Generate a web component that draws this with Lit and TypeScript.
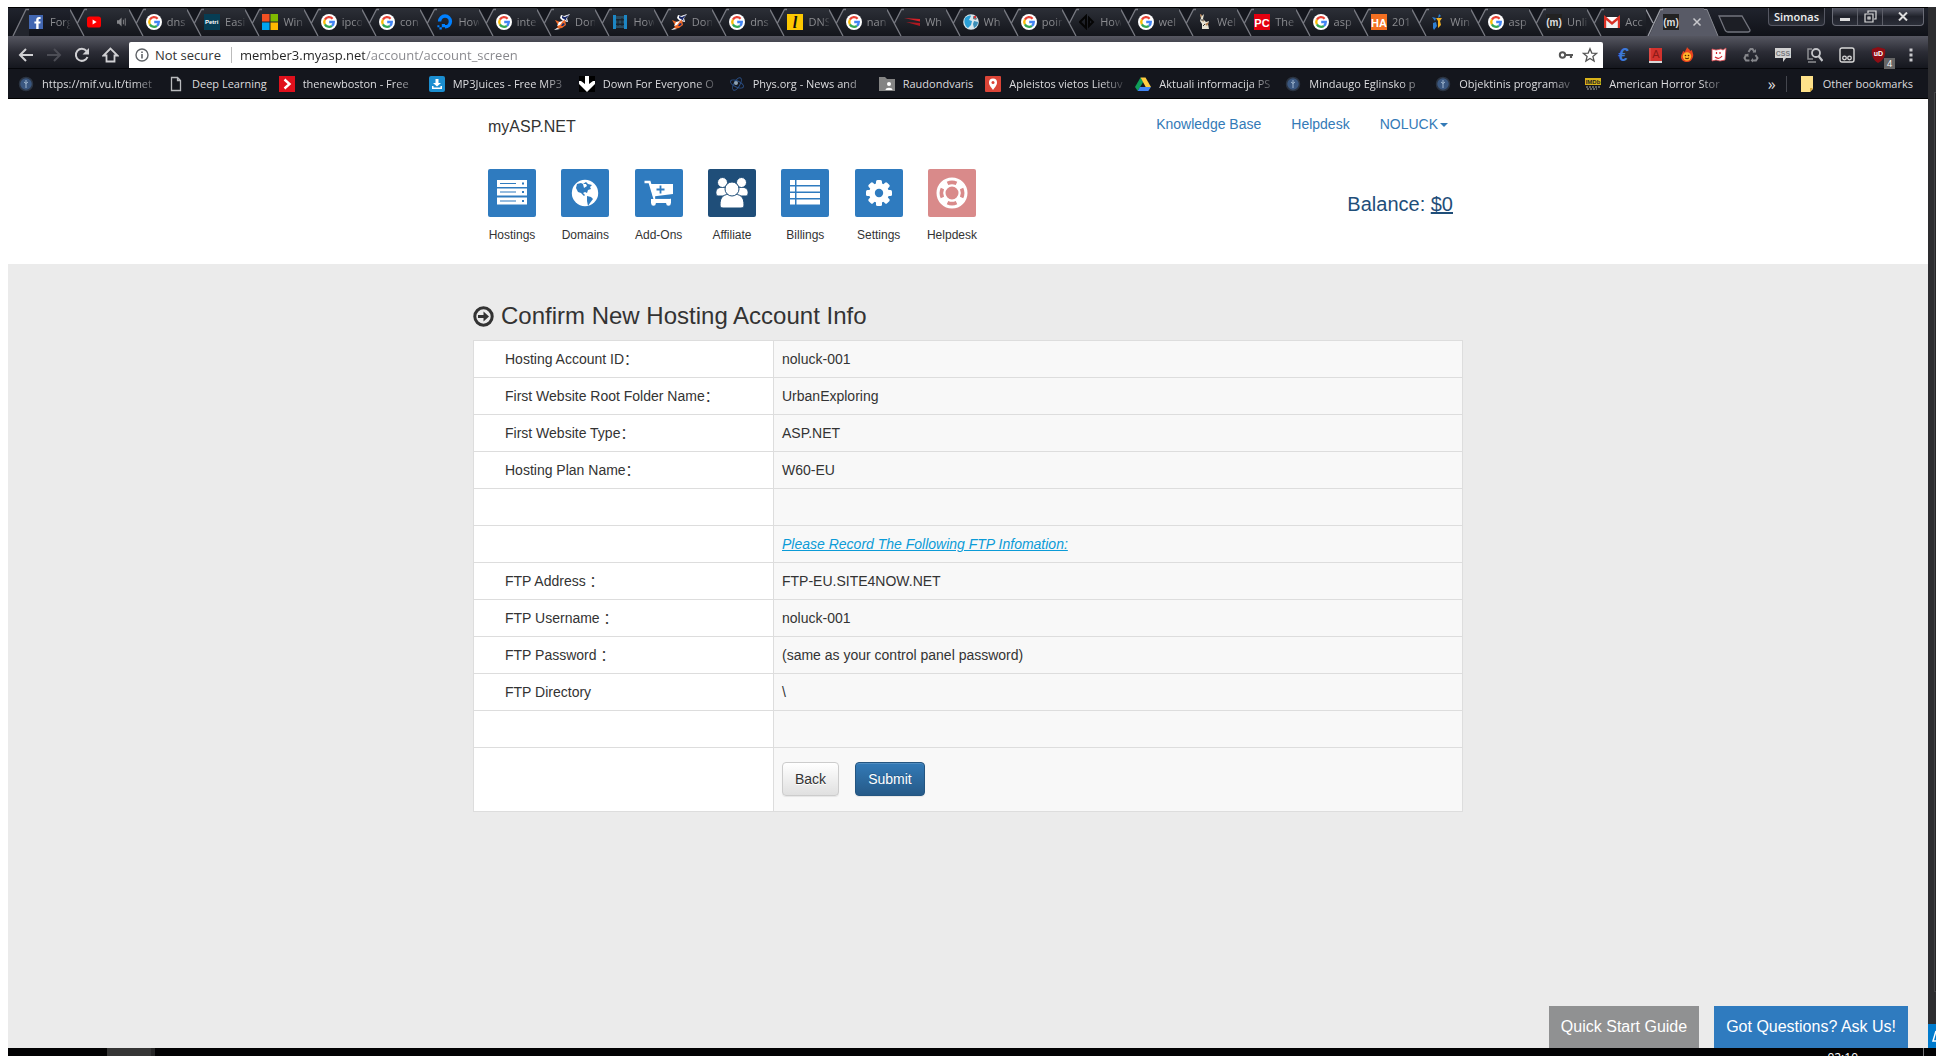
import { LitElement, html, css, svg, nothing, TemplateResult, SVGTemplateResult } from "lit";
import { customElement, property } from "lit/decorators.js";
import { classMap } from "lit/directives/class-map.js";

const art: Record<string, SVGTemplateResult> = {
  google: svg`<circle cx="8" cy="8" r="8" fill="#fff"/>
    <g fill="none" stroke-width="2.3"><path d="M11.6 4.7A4.8 4.8 0 0 0 3.9 5.6" stroke="#ea4335"/>
    <path d="M3.9 5.6A4.8 4.8 0 0 0 3.9 10.4" stroke="#fbbc05"/>
    <path d="M3.9 10.4A4.8 4.8 0 0 0 11 11.8" stroke="#34a853"/>
    <path d="M11 11.8A4.8 4.8 0 0 0 12.8 8H8.2" stroke="#4285f4"/></g>`,
  facebook: svg`<rect x="0" y="1" width="14" height="14" fill="#4267b2"/><path d="M7.2 15V9.600H5.400V7.400h1.800V5.800c0-1.900 1.100-2.900 2.900-2.900h1.500v2.100h-1c-.8 0-1 .4-1 1v1.400h2l-.3 2.200h-1.700V15z" fill="#fff"/>`,
  youtube: svg`<rect x="0" y="2.5" width="14" height="11" rx="2.6" fill="#f00"/><path d="M5.600 5.500v5L9.600 8z" fill="#fff"/>`,
  petri: svg`<rect width="16" height="16" fill="#063d54"/><text x="1" y="10" font-size="6" font-weight="bold" fill="#fff" font-family="Liberation Sans, sans-serif">Petri</text>`,
  windows: svg`<path d="M0 0h7.5v7.5H0z" fill="#f25022"/><path d="M8.5 0H16v7.5H8.5z" fill="#7fba00"/><path d="M0 8.5h7.5V16H0z" fill="#00a4ef"/><path d="M8.5 8.5H16V16H8.5z" fill="#ffb900"/>`,
  ocean: svg`<path d="M8 12.8A5.4 5.4 0 1 0 2.6 7.4" fill="none" stroke="#0080ff" stroke-width="3.4"/><path d="M4.8 10H8v3.2H4.8zM2.4 13.2h2.4v2.4H2.4zM.4 11.2h2v2h-2z" fill="#0080ff"/>`,
  bird: svg`<path d="M7 1l3 1 6-2-3 4 1 4-5-1-3-3z" fill="#fff"/><path d="M8 2l3 1 4-2-3 4 1 2-5-3z" fill="#1b2a6b"/><path d="M1 6l5 2 5-2 1 5-4 3-5 1 1-4z" fill="#f06a28"/><path d="M5 8l4-1-3 4-3 1z" fill="#fff"/><path d="M9 9l2 1-2 2-2 0z" fill="#1b2a6b"/><path d="M0 16l3-2 3 1z" fill="#fff"/>`,
  server: svg`<path d="M1 1h3v14H1zM12 1h3v14h-3z" fill="#1c86c4"/><path d="M4 2h8v3H4zM4 6.500h8v3H4zM4 11h8v3H4z" fill="#2a4a5e"/><path d="M6 5v7M10 4v8" stroke="#10222e"/>`,
  letterL: svg`<rect width="16" height="16" fill="#fdc800"/><text x="8" y="13.500" text-anchor="middle" font-size="16" font-style="italic" font-weight="bold" fill="#111" font-family="Liberation Serif, serif">l</text>`,
  flag: svg`<path d="M0 4l16 1v2.500z" fill="#d62027"/><path d="M2 8l14 1v3z" fill="#b01820"/>`,
  globe: svg`<circle cx="8" cy="8" r="7.800" fill="#d8e8ee"/><path d="M2 4c2-2 5-3 6-2L6 6l3 1-1 4-3 3C2 12 .5 8 2 4z" fill="#2a9fd6"/><path d="M11 7l4 1c0 3-2 5-4 6l-1-4z" fill="#3b8fb8"/><path d="M10 2l4 2-1 2-3-1z" fill="#6b7f88"/><circle cx="12" cy="3" r="1.200" fill="#d33"/>`,
  diamond: svg`<path d="M7 2L1 8l6 6V2zM10 4v8l4-4z" fill="none" stroke="#050505" stroke-width="2"/>`,
  rabbit: svg`<path d="M4 0l2 2 2-2-1 5 3 3 3-1-1 3 1 5H6l0-5-2-3 1-3z" fill="#e8e4d4"/><path d="M4 0l2 1-1 3zM6 6l2 1-1 1zM9 10l4-2-2 4z" fill="#b07a4a"/><path d="M5 6h3M7 12l2-2" stroke="#333"/>`,
  pc: svg`<rect width="16" height="16" fill="#e4000f"/><text x="8" y="12.500" text-anchor="middle" font-size="11" font-weight="bold" fill="#fff" font-family="Liberation Sans, sans-serif">PC</text>`,
  joomla: svg`<path d="M10 0l2 2-3 2zM3 3l4 1-1 3zM4 9l3-1 1 4-3 4-1-2z" fill="#2d7fd3"/><path d="M7 4h6l-2 3 1 4-3 3 0-7z" fill="#f5b324"/>`,
  m: svg`<rect width="16" height="16" fill="#222"/><text x="8" y="12" text-anchor="middle" font-size="10" font-weight="bold" fill="#ddd" font-family="Liberation Sans, sans-serif">(m)</text>`,
  ha: svg`<rect width="16" height="16" fill="#f36f21"/><text x="8" y="12.500" text-anchor="middle" font-size="11" font-weight="bold" fill="#fff" font-family="Liberation Sans, sans-serif">HA</text>`,
  gmail: svg`<path d="M1 3h14v11H1z" fill="#f2f2f2"/><path d="M1 14V3.500l7 6 7-6V14" fill="none" stroke="#d93025" stroke-width="2.400"/><path d="M3 3l5 4 5-4z" fill="#fff"/>`,
  crest: svg`<circle cx="8" cy="8" r="6.500" fill="#3a5780" stroke="#2b3442" stroke-width="1.500"/><path d="M8 4v8M6 6l2 1.500L10 6" stroke="#9db4cc" fill="none"/>`,
  page: svg`<path d="M3.500 1.500h6l3 3v10h-9z M9.500 1.500v3h3" fill="none" stroke="#b9babd" stroke-width="1.300"/>`,
  boston: svg`<rect width="16" height="16" fill="#e0101c"/><path d="M5.500 3.500L10.500 8l-5 4.500" fill="none" stroke="#fff" stroke-width="2.400"/>`,
  juice: svg`<rect width="16" height="16" rx="2" fill="#1b8ed0"/><path d="M6.500 3h3v4H12L8 10.500 4 7h2.500zM3 10h1.500v1.500h7V10H13v3H3z" fill="#fff"/>`,
  down: svg`<rect width="16" height="16" fill="#000"/><path d="M6 0h4v8l4-3h2v3l-8 8-8-8V5h2l4 3z" fill="#fff"/>`,
  atom: svg`<g fill="none" stroke="#2a4f86" stroke-width="1"><ellipse cx="8" cy="8" rx="7" ry="3" transform="rotate(25 8 8)"/><ellipse cx="8" cy="8" rx="7" ry="3" transform="rotate(-60 8 8)"/></g><circle cx="7" cy="7" r="2" fill="#8ea3b5"/>`,
  folder: svg`<path d="M0 1h6l2 2h8v12H0z" fill="#848484"/><circle cx="10" cy="8" r="2" fill="#fff"/><path d="M6.500 14c0-3 7-3 7 0z" fill="#fff"/>`,
  pin: svg`<rect width="16" height="16" rx="1" fill="#db4437"/><path d="M8 14C5 10 4 8.500 4 6.500a4 4 0 0 1 8 0C12 8.500 11 10 8 14z" fill="#fff"/><circle cx="8" cy="6.500" r="1.500" fill="#db4437"/>`,
  drive: svg`<path d="M5.500 1.500L0 11l2.700 4L8.200 6z" fill="#0f9d58"/><path d="M5.500 1.500h5L16 11h-5.300z" fill="#ffcd40"/><path d="M5 11h11l-2.700 4H2.700z" fill="#4285f4"/>`,
  imdb: svg`<rect y="2" width="16" height="7" fill="#d8b21a"/><text x="8" y="8" text-anchor="middle" font-size="6" font-weight="bold" fill="#222" font-family="Liberation Sans, sans-serif">IMDb</text><path d="M1 11h14M2 13h10" stroke="#aaa" stroke-dasharray="2 1"/>`,
  note: svg`<path d="M2 0h12v13l-3 3H2z" fill="#ffe28a"/><path d="M14 12h-3v4z" fill="#d9a93a"/>`,
};

const extensions: Array<[string, SVGTemplateResult]> = [
  ["Euro converter", svg`<text x="8" y="14" text-anchor="middle" font-size="18" font-weight="bold" font-style="italic" fill="#3c78d8" font-family="Liberation Sans, sans-serif">€</text>`],
  ["Dictionary", svg`<path d="M2 1h13v13H2z" fill="#d2322d"/><path d="M2 14h13v2H2z" fill="#d8d8d8"/><text x="9" y="11" text-anchor="middle" font-size="11" fill="#8b1a17" font-family="Liberation Sans, sans-serif">A</text><path d="M3 1v13" stroke="#e8605c"/>`],
  ["Flame", svg`<path d="M8 0c1 2 3 2 3 4l2-1c0 2 2 4 1 7s-3 5-6 5-6-2-6-5 2-4 2-6l2 1c0-2 2-3 2-5z" fill="#e8431f"/><circle cx="8" cy="9.500" r="4.200" fill="#ffb52b"/><circle cx="6.500" cy="8.500" r=".8" fill="#552200"/><circle cx="9.500" cy="8.500" r=".8" fill="#552200"/><path d="M6 11q2 1.500 4 0" stroke="#552200" fill="none"/>`],
  ["Comics", svg`<path d="M1 2l4 1 5-1 2 1 3-2-1 12-5 1-4-1-4 1z" fill="#fff" stroke="#e04a50" stroke-width=".8"/><path d="M4 10q4 3 7-1M5.500 5v2M9 5v2" stroke="#d8232a" fill="none" stroke-width="1.200"/>`],
  ["Recycle", svg`<path d="M5.500 5l2-3h2l2 3M12.500 8l2 3-1.500 2.500H9.500M6.500 13.500H3L1.500 11l2-3.500" fill="none" stroke="#85868b" stroke-width="2"/><path d="M9.500 5.500h3.500V2zM10 11v4.500L7.500 13.500zM1 8l4.500-1.500L5.500 10z" fill="#85868b"/>`],
  ["CSS viewer", svg`<path d="M0 1h16v10h-5l-3 4v-4H0z" fill="#d2d2d2"/><text x="8" y="9" text-anchor="middle" font-size="7" font-weight="bold" fill="#77787c" font-family="Liberation Sans, sans-serif">CSS</text>`],
  ["Image search", svg`<path d="M5 2H1v10h5M1 15h8" fill="none" stroke="#8d8e93" stroke-width="1.500"/><circle cx="9" cy="6" r="4" fill="none" stroke="#c4c5c9" stroke-width="1.800"/><path d="M11.500 9l4 5" stroke="#c4c5c9" stroke-width="2.200"/>`],
  ["User scripts", svg`<rect x="1" y="1" width="14" height="14" rx="2" fill="#24252b" stroke="#d8d8d8" stroke-width="1.400"/><circle cx="5.500" cy="11" r="1.800" fill="none" stroke="#d8d8d8" stroke-width="1.300"/><circle cx="10.500" cy="11" r="1.800" fill="none" stroke="#d8d8d8" stroke-width="1.300"/>`],
  ["Ad blocker", svg`<path d="M7 0l7 2c1 6-1 11-7 14C2 13 0 8 1 2z" fill="#8f0d14"/><text x="7.500" y="9" text-anchor="middle" font-size="7" font-weight="bold" fill="#fff" font-family="Liberation Sans, sans-serif">uD</text>`],
];

/** Decorative 16-unit icon, looked up by name. */
@customElement("fav-icon")
export class FavIcon extends LitElement {
  static styles = css`
    :host { display: block; flex: none; width: 16px; height: 16px; }
    .art { display: block; width: 16px; height: 16px; }
  `;
  @property() name = "google";
  render() {
    return html`<svg class="art" viewBox="0 0 16 16" aria-hidden="true">${art[this.name]}</svg>`;
  }
}

const tabs: Array<[string, string]> = [
  ["facebook", "Forg"], ["youtube", ""], ["google", "dns"], ["petri", "Easi"], ["windows", "Win"],
  ["google", "ipco"], ["google", "con"], ["ocean", "How"], ["google", "inte"], ["bird", "Don"],
  ["server", "How"], ["bird", "Don"], ["google", "dns"], ["letterL", "DNS"], ["google", "nan"],
  ["flag", "Wh"], ["globe", "Wh"], ["google", "poin"], ["diamond", "How"], ["google", "wel"],
  ["rabbit", "Wel"], ["pc", "The"], ["google", "asp"], ["ha", "201"], ["joomla", "Win"],
  ["google", "asp"], ["m", "Unli"], ["gmail", "Acc"], ["m", ""],
];

const bookmarks: Array<[string, string]> = [
  ["crest", "https://mif.vu.lt/timet"], ["page", "Deep Learning"], ["boston", "thenewboston - Free"],
  ["juice", "MP3Juices - Free MP3"], ["down", "Down For Everyone O"], ["atom", "Phys.org - News and"],
  ["folder", "Raudondvaris"], ["pin", "Apleistos vietos Lietuv"], ["drive", "Aktuali informacija PS"],
  ["crest", "Mindaugo Eglinsko p"], ["crest", "Objektinis programav"], ["imdb", "American Horror Stor"],
];

@customElement("browser-chrome")
export class BrowserChrome extends LitElement {
  static styles = css`
    :host { display: block; font: 11px/16px "Open Sans", "Noto Sans", sans-serif; color: #dcdcdf; background: #14161d; }
    button { font: inherit; color: inherit; background: none; border: 0; padding: 0; margin: 0; }
    a { color: inherit; text-decoration: none; }
    svg { display: block; flex: none; }
    .strip { display: flex; height: 29px; box-sizing: border-box; border-top: 1px solid #000;
      background: linear-gradient(#20232d, #101218); padding-left: 4px; }
    .tabs { flex: 1; min-width: 0; display: grid; grid-auto-flow: column; grid-auto-columns: minmax(0, 1fr); }
    .tab { display: flex; align-items: center; min-width: 0; color: #8b8c90; text-align: left;
      background: linear-gradient(#2c2f37, #13151b); }
    .tab.first { background: none; }
    .tab.active { background: #585a66; }
    .label { flex: 1; min-width: 0; margin-left: 5px; white-space: nowrap;
      mask-image: linear-gradient(90deg, #000 60%, rgba(0, 0, 0, .2)); }
    .speaker { margin-left: 14px; }
    .close { margin-left: 13px; }
    .side { display: flex; flex: none; align-items: flex-start; width: 224px; box-sizing: border-box; padding-right: 4px; }
    .user { margin-left: auto; width: 57px; height: 18px; line-height: 16px; font-weight: 600; color: #eee;
      border: 1px solid #555762; border-top: 0; border-radius: 0 0 4px 4px; background: linear-gradient(#15171d, #2d303a); }
    .wins { display: flex; margin-left: 7px; border: 1px solid #6a6c76; border-top: 0; border-radius: 0 0 4px 4px;
      background: linear-gradient(#565966, #20222b 50%, #2b2e38); }
    .win { display: grid; place-items: center; width: 25px; height: 17px; border-right: 1px solid #5c5e68; }
    .win.last { width: 40px; border-right: 0; }
    .bar { display: flex; align-items: center; height: 32px; padding: 6px 0 0 10px; box-sizing: border-box;
      background: linear-gradient(#565761, #2b2c35 50%, #15171e); }
    .nav { display: flex; align-items: center; gap: 12px; flex: none; padding-right: 10px; }
    .omni { flex: 1; min-width: 0; height: 26px; display: flex; align-items: center; background: #fff; border-radius: 2px 2px 0 0;
      color: #333; font-size: 13px; padding: 0 5px 0 6px; box-sizing: border-box; }
    .secure { margin-left: 6px; padding-right: 10px; border-right: 1px solid #bbb; }
    .url { flex: 1; min-width: 0; border: 0; padding: 0 0 0 8px; font: inherit; outline: 0; color: transparent;
      background: linear-gradient(90deg, #222 133px, #85858a 133px) text; }
    .omni svg + svg { margin-left: 8px; }
    .exts { display: flex; flex: none; padding: 0 1px 0 4px; }
    .ext { position: relative; width: 32px; height: 20px; display: grid; place-items: center; }
    .count { position: absolute; right: 0; bottom: -4px; width: 11px; height: 11px; background: #666; color: #fff;
      font-size: 9px; line-height: 11px; text-align: center; }
    .marks { display: flex; align-items: center; height: 31px; box-sizing: border-box; border-bottom: 1px solid #000;
      border-top: 1px solid #05060a; padding: 0 15px 0 10px; gap: 12px; }
    .mark { display: flex; align-items: center; gap: 8px; white-space: nowrap; }
    .name.long { mask-image: linear-gradient(90deg, #000 80%, rgba(0, 0, 0, .2)); width: 114px; }
    .more { margin-left: auto; padding-right: 10px; border-right: 1px solid #44464e; font-size: 16px; }
  `;

  private edge(kind: string): TemplateResult {
    const line = "#777981";
    return html`<svg width="17" height="28" viewBox="0 0 17 28" aria-hidden="true">${
      kind === "first"
        ? svg`<path d="M1 28L14 2h3v26z" fill="#22252d"/><path d="M1 28L14 1.500h3" fill="none" stroke=${line} stroke-width="1.300"/>`
        : kind === "active"
          ? svg`<path d="M0 0h16L3 28H0z" fill="#1c1e25"/><path d="M0 1.500L7 15M2 28L14.500 1.500H17" fill="none" stroke="#9a9ca4" stroke-width="1.300"/>`
          : svg`<path d="M0 0h15L8 14z" fill="#14161d"/><path d="M0 1.500L14 28M7.500 15L14.500 1.500H17" fill="none" stroke=${line} stroke-width="1.300"/>`
    }</svg>`;
  }

  render() {
    const last = tabs.length - 1;
    return html`
      <div class="strip">
        <div class="tabs" role="tablist">
          ${tabs.map(([icon, label], i) => html`
            <button role="tab" aria-selected=${i === last} class=${classMap({ tab: true, first: i === 0, active: i === last })}>
              ${this.edge(i === 0 ? "first" : i === last ? "active" : "")}
              <fav-icon name=${icon}></fav-icon>
              ${i === 1 ? html`<svg class="speaker" width="11" height="12" viewBox="0 0 12 12" aria-hidden="true"><path d="M0 4h2l3-3v10L2 8H0z" fill="#85868a"/><path d="M7 3.500v5M9 2v8" stroke="#85868a"/></svg>`
                : i === last ? html`<svg class="close" width="10" height="10" viewBox="0 0 10 10" aria-hidden="true"><path d="M1.500 1.500l7 7m0-7l-7 7" stroke="#c8c8cc" stroke-width="1.500"/></svg>`
                : html`<span class="label">${label}</span>`}
            </button>`)}
        </div>
        <div class="side">
          <svg width="48" height="28" viewBox="0 0 48 28" aria-hidden="true">
            <path d="M0 1h3l11 27H0z" fill="#585a66"/><path d="M0 1.500h3L14 28" fill="none" stroke="#85878f"/>
            <path d="M15 8h23l8 14c0 2-1 2-2 2H24c-2 0-2-1-3-2z" fill="#1c1e25" stroke="#72747d" stroke-width="1.300"/>
          </svg>
          <button class="user">Simonas</button>
          <div class="wins">
            <button class="win" aria-label="Minimize"><svg width="12" height="10" viewBox="0 0 12 10"><path d="M1 6h10v3H1z" fill="#ddd"/></svg></button>
            <button class="win" aria-label="Restore"><svg width="13" height="13" viewBox="0 0 13 13"><path d="M4 3V1h8v8h-2M1 4h8v8H1z M4 7h2v2H4z" fill="none" stroke="#ddd" stroke-width="1.200"/></svg></button>
            <button class="win last" aria-label="Close"><svg width="12" height="9" viewBox="0 0 12 9"><path d="M2 .5l8 8m0-8l-8 8" stroke="#ddd" stroke-width="2"/></svg></button>
          </div>
        </div>
      </div>
      <div class="bar">
        <div class="nav">
          <button aria-label="Back"><svg width="16" height="16" viewBox="0 0 16 16"><path d="M15 8H2.500M8 2L2 8l6 6" fill="none" stroke="#d0d0d3" stroke-width="2"/></svg></button>
          <button aria-label="Forward"><svg width="16" height="16" viewBox="0 0 16 16"><path d="M1 8h12.500M8 2l6 6-6 6" fill="none" stroke="#4c4d55" stroke-width="2"/></svg></button>
          <button aria-label="Reload"><svg width="16" height="16" viewBox="0 0 16 16"><path d="M13.500 10A6 6 0 1 1 12.500 4" fill="none" stroke="#d0d0d3" stroke-width="2"/><path d="M15 1v6.500H8.500z" fill="#d0d0d3"/></svg></button>
          <button aria-label="Home"><svg width="17" height="16" viewBox="0 0 17 16"><path d="M8.500 1.500L1.500 8.500h3v6h8v-6h3z" fill="none" stroke="#d0d0d3" stroke-width="1.800"/></svg></button>
        </div>
        <div class="omni">
          <svg width="14" height="14" viewBox="0 0 14 14" aria-hidden="true"><circle cx="7" cy="7" r="6" fill="none" stroke="#5f6368" stroke-width="1.400"/><path d="M7 6v4.500M7 3.500V5" stroke="#5f6368" stroke-width="1.600"/></svg>
          <span class="secure">Not secure</span>
          <input class="url" aria-label="Address" value="member3.myasp.net/account/account_screen">
          <svg width="16" height="16" viewBox="0 0 16 16" aria-hidden="true"><circle cx="4.500" cy="8" r="2.700" fill="none" stroke="#555" stroke-width="2"/><path d="M7 8h8M13 8v3" stroke="#555" stroke-width="2.200"/></svg>
          <svg width="16" height="16" viewBox="0 0 16 16" aria-hidden="true"><path d="M8 1.700l1.800 4.400 4.700.3-3.600 3 1.200 4.600L8 11.500 3.900 14l1.200-4.600-3.600-3 4.700-.3z" fill="none" stroke="#555" stroke-width="1.300"/></svg>
        </div>
        <div class="exts">
          ${extensions.map(([label, shape], i) => html`
            <button class="ext" aria-label=${label}><svg width="16" height="16" viewBox="0 0 16 16">${shape}</svg>
              ${i === extensions.length - 1 ? html`<span class="count">4</span>` : nothing}</button>`)}
          <button class="ext" aria-label="Menu"><svg width="4" height="14" viewBox="0 0 4 14"><path d="M.5.500h3v3h-3zM.5 5.500h3v3h-3zM.5 10.500h3v3h-3z" fill="#c8c8cc"/></svg></button>
        </div>
      </div>
      <nav class="marks" aria-label="Bookmarks">
        ${bookmarks.map(([icon, label]) => html`
          <a class="mark" href="#"><fav-icon name=${icon}></fav-icon><span class=${classMap({ name: true, long: label.length > 14 })}>${label}</span></a>`)}
        <button class="more" aria-label="More bookmarks">»</button>
        <a class="mark" href="#"><fav-icon name="note"></fav-icon><span>Other bookmarks</span></a>
      </nav>`;
  }
}

const tiles: Array<{ label: string; kind: string; shape: SVGTemplateResult }> = [
  { label: "Hostings", kind: "", shape: svg`<path d="M1 3h30v7H1zM1 11.500h30v7H1zM1 20.500h30v7H1z" fill="#fff"/><path d="M4 6.500h16M4 15h16M4 24h16" stroke="var(--tile)" stroke-width="1.200"/><path d="M26 5.500h2v2h-2zM26 14h2v2h-2zM26 23h2v2h-2z" fill="var(--tile)"/>` },
  { label: "Domains", kind: "", shape: svg`<circle cx="16" cy="16" r="13.200" fill="#fff"/><path d="M8 7l4-1 2 1 3-2 2 2 4 1-2 2 1 2-3 1-1 3-2-1-2 1 2 2-1 1-3-3-3-1-2-4z" fill="var(--tile)"/><path d="M18 19l4 1 2 2-3 4-2 3-1-5z" fill="var(--tile)"/><path d="M14 7l3 0 1 2-3 2z" fill="#fff"/>` },
  { label: "Add-Ons", kind: "", shape: svg`<path d="M1.500 5h5L12 23h16" fill="none" stroke="#fff" stroke-width="2.400"/><path d="M7 7h23v10L10 19.500z" fill="#fff"/><path d="M8 22h20v4H8z" fill="#fff"/><path d="M12 21h15" stroke="var(--tile)" stroke-width="1.400"/><circle cx="10.500" cy="26.500" r="2.300" fill="#fff"/><circle cx="25.500" cy="26.500" r="2.300" fill="#fff"/><path d="M17.500 8.500v8M13.500 12.500h8" stroke="var(--tile)" stroke-width="1.800"/>` },
  { label: "Affiliate", kind: "dark", shape: svg`<g fill="#fff" stroke="var(--tile)" stroke-width="1"><path d="M0 17c-1-5 3-7 7-7s6 3 6 9H3c-1 0-3 0-3-2zM32 17c1-5-3-7-7-7s-6 3-6 9h10c1 0 3 0 3-2z"/><circle cx="6.500" cy="5.500" r="5"/><circle cx="25.500" cy="5.500" r="5"/><path d="M4 28c0-8 3-11 12-11s12 3 12 11c0 2-1 3-3 3H7c-2 0-3-1-3-3z"/><circle cx="16" cy="12" r="7"/></g>` },
  { label: "Billings", kind: "", shape: svg`<path d="M1 3h5v5H1zM7.500 3H31v5H7.500zM1 9.500h5v5H1zM7.500 9.500H31v5H7.500zM1 16h5v5H1zM7.500 16H31v5H7.500zM1 22.500h5v5H1zM7.500 22.500H31v5H7.500z" fill="#fff"/>` },
  { label: "Settings", kind: "", shape: svg`<g fill="#fff"><circle cx="16" cy="16" r="10"/>${[0, 45, 90, 135].map((a) => svg`<rect x="13" y="3" width="6" height="26" rx="1.500" transform="rotate(${a} 16 16)"/>`)}</g><circle cx="16" cy="16" r="4.200" fill="var(--tile)"/>` },
  { label: "Helpdesk", kind: "rose", shape: svg`<circle cx="16" cy="16" r="11" fill="none" stroke="#fff" stroke-width="9"/><g fill="none" stroke="var(--tile)" stroke-width="3.600"><path d="M11.500 6.400a10.600 10.600 0 0 1 9 0M11.500 25.600a10.600 10.600 0 0 0 9 0M6.400 11.500a10.600 10.600 0 0 0 0 9M25.600 11.500a10.600 10.600 0 0 1 0 9"/></g>` },
];

const rows: Array<[string, string | TemplateResult]> = [
  ["Hosting Account ID：", "noluck-001"],
  ["First Website Root Folder Name：", "UrbanExploring"],
  ["First Website Type：", "ASP.NET"],
  ["Hosting Plan Name：", "W60-EU"],
  ["", ""],
  ["", html`<em class="notice">Please Record The Following FTP Infomation:</em>`],
  ["FTP Address ：", "FTP-EU.SITE4NOW.NET"],
  ["FTP Username ：", "noluck-001"],
  ["FTP Password ：", "(same as your control panel password)"],
  ["FTP Directory", "\\"],
  ["", ""],
];

@customElement("account-page")
export class AccountPage extends LitElement {
  static styles = css`
    :host { display: flex; flex-direction: column; position: relative; min-height: 0; background: #ebebeb; color: #333;
      font: 14px/20px "Liberation Sans", "Noto Sans CJK SC", sans-serif; }
    a { color: #337ab7; text-decoration: none; }
    .head { background: #fff; padding-bottom: 19px; }
    .wrap { width: min(990px, 100%); box-sizing: border-box; margin: 0 auto; }
    .inner { padding: 0 10px 0 15px; }
    .top { display: flex; justify-content: space-between; align-items: center; height: 52px; }
    .brand { font-size: 16px; color: #333; padding-top: 4px; }
    .links { display: flex; gap: 30px; padding: 0 5px 2px 0; }
    .caret { display: inline-block; margin-left: 2px; vertical-align: middle; border: 4px solid transparent; border-top-color: currentColor; border-bottom: 0; }
    .mid { display: flex; justify-content: space-between; padding-top: 18px; }
    .tiles { display: flex; justify-content: space-between; width: 488px; }
    .tile { display: flex; flex-direction: column; align-items: center; width: 48px; gap: 8px; font-size: 12px; color: #333; --tile: #2f7bbf; }
    .tile.dark { --tile: #1f4e79; }
    .tile.rose { --tile: #d98a8a; }
    .box { display: grid; place-items: center; width: 48px; height: 48px; border-radius: 2px; background: var(--tile); }
    .balance { font-size: 20px; line-height: 24px; color: #1f4e79; padding-top: 23px; }
    .balance a { color: inherit; text-decoration: underline; text-decoration-thickness: 2px; }
    h1 { display: flex; align-items: center; gap: 7px; margin: 0; padding: 38px 0 10px; font-weight: 400; font-size: 24px; line-height: 28px; }
    table { width: 100%; border-collapse: collapse; table-layout: fixed; background: #f8f8f8; }
    th, td { border: 1px solid #ddd; padding: 8px; height: 20px; font-weight: 400; text-align: left; }
    th { width: 260px; padding-left: 31px; background: #fff; }
    .notice { color: #0b9bd7; text-decoration: underline; }
    .actions { padding: 14px 8px 15px; }
    .pair { display: flex; gap: 16px; }
    .btn { font: inherit; padding: 6px 12px; border: 1px solid #ccc; border-radius: 4px; color: #333;
      background: linear-gradient(#fff, #e0e0e0); text-shadow: 0 1px 0 #fff; box-shadow: inset 0 1px 0 rgba(255,255,255,.15), 0 1px 1px rgba(0,0,0,.075); }
    .btn.go { color: #fff; border-color: #245580; background: linear-gradient(#337ab7, #265a88); text-shadow: 0 -1px 0 rgba(0,0,0,.2); }
    .help { position: absolute; right: 20px; bottom: 0; display: flex; gap: 15px; }
    .chip { font-size: 16px; line-height: 18px; padding: 12px; color: #fff; background: #909192; }
    .chip.ask { background: #2f7bbf; }
  `;
  render() {
    return html`
      <header class="head"><div class="wrap inner">
        <div class="top">
          <a class="brand" href="#">myASP.NET</a>
          <nav class="links"><a href="#">Knowledge Base</a><a href="#">Helpdesk</a><a href="#">NOLUCK<span class="caret"></span></a></nav>
        </div>
        <div class="mid">
          <nav class="tiles">
            ${tiles.map((t) => html`<a href="#" class="tile ${t.kind}"><span class="box"><svg width="32" height="32" viewBox="0 0 32 32" aria-hidden="true">${t.shape}</svg></span><span>${t.label}</span></a>`)}
          </nav>
          <div class="balance">Balance: <a href="#">$0</a></div>
        </div>
      </div></header>
      <main class="wrap">
        <h1><svg width="21" height="21" viewBox="0 0 21 21" aria-hidden="true"><circle cx="10.500" cy="10.500" r="8.700" fill="none" stroke="#333" stroke-width="3"/><path d="M5 9h5.500V5.500l5.500 5-5.500 5V12H5z" fill="#333"/></svg>Confirm New Hosting Account Info</h1>
        <table>
          <tbody>
            ${rows.map(([label, value]) => html`<tr><th scope="row">${label}</th><td>${value}</td></tr>`)}
            <tr><th></th><td class="actions"><div class="pair"><button class="btn">Back</button><button class="btn go">Submit</button></div></td></tr>
          </tbody>
        </table>
      </main>
      <div class="help"><a class="chip" href="#">Quick Start Guide</a><a class="chip ask" href="#">Got Questions? Ask Us!</a></div>`;
  }
}

@customElement("app-root")
export class AppRoot extends LitElement {
  static styles = css`
    :host { display: grid; grid-template-columns: minmax(0, 1fr) 8px; grid-template-rows: auto minmax(0, 1fr) 8px;
      box-sizing: border-box; height: 100vh; padding: 7px 0 0 8px; background: #fff; overflow: hidden; }
    .behind { grid-column: 2; grid-row: 1 / 3; display: flex; flex-direction: column; background: #2d2d30; }
    .panel { flex: 1; margin: 85px 0 32px 6px; border: 1px solid #434346; border-right: 0; background: #252526; }
    .status { display: block; height: 24px; background: #007acc; }
    browser-chrome, account-page { grid-column: 1; }
    .taskbar { grid-column: 1 / 3; display: flex; background: #020203; overflow: hidden; color: #fff;
      font: 12px/16px "Open Sans", sans-serif; }
    .app { width: 44px; margin-left: 99px; background: #353535; border-right: 4px solid #262626; }
    .clock { margin-left: auto; padding: 2px 65px 0 0; }
    .peek { width: 12px; border-left: 1px solid #77777a; }
  `;
  render() {
    return html`
      <browser-chrome></browser-chrome>
      <account-page></account-page>
      <div class="behind"><div class="panel"></div>
        <svg class="status" width="8" height="24" viewBox="0 0 8 24" aria-hidden="true"><path d="M8 7L5 17h3" fill="none" stroke="#fff" stroke-width="1.500"/></svg></div>
      <div class="taskbar"><div class="app"></div><time class="clock">02:10</time><div class="peek"></div></div>`;
  }
}
